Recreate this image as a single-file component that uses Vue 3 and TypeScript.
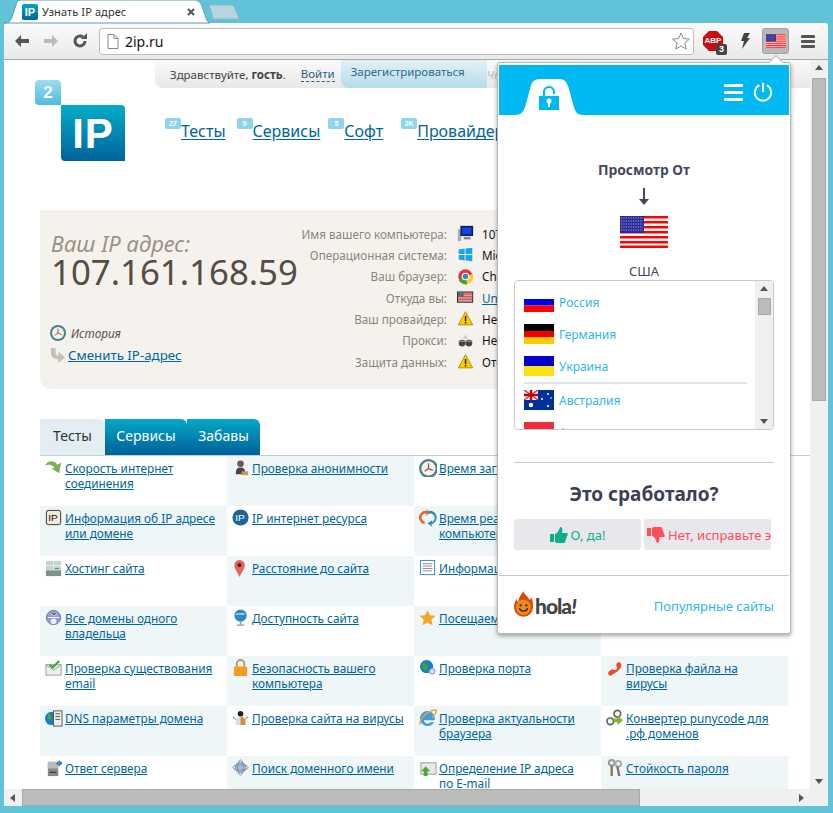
<script setup lang="ts">
const usMarkup = `<rect width="48" height="32" fill="#fff"/><g fill="#f00"><rect width="48" height="2.5"/><rect y="5" width="48" height="2.5"/><rect y="10" width="48" height="2.5"/><rect y="15" width="48" height="2.5"/><rect y="20" width="48" height="2.5"/><rect y="25" width="48" height="2.5"/><rect y="29.5" width="48" height="2.5"/></g><rect width="24" height="17" fill="#2a2a9c"/><path d="M1 2h22M1 5h22M1 8h22M1 11h22M1 14h22" stroke="#aab" stroke-width="1.2" stroke-dasharray="1.2 1.2"/>`

const countries = [
  { name: 'Россия', flag: '<rect width="30" height="20" fill="#fff"/><rect y="7" width="30" height="6.5" fill="#0000e6"/><rect y="13.5" width="30" height="6.5" fill="#f00"/>' },
  { name: 'Германия', flag: '<rect width="30" height="7" fill="#000"/><rect y="7" width="30" height="6.5" fill="#e00"/><rect y="13.5" width="30" height="6.5" fill="#fc0"/>' },
  { name: 'Украина', flag: '<rect width="30" height="10" fill="#0000cc"/><rect y="10" width="30" height="10" fill="#fae014"/>' },
  { name: 'Австралия', flag: '<rect width="30" height="20" fill="#00309a"/><rect width="14" height="10" fill="#eef"/><path d="M0 0l14 10M14 0L0 10" stroke="#c33" stroke-width="1.4"/><path d="M7 0v10M0 5h14" stroke="#c00" stroke-width="2.4"/><circle cx="7" cy="15" r="2.2" fill="#fff"/><circle cx="24" cy="4" r="1.1" fill="#fff"/><circle cx="18" cy="9" r="1" fill="#fff"/><circle cx="27" cy="8" r=".8" fill="#fff"/><circle cx="24" cy="16" r="1.1" fill="#fff"/>' },
  { name: 'Австрия', flag: '<rect width="30" height="7" fill="#ef2b3c"/><rect y="7" width="30" height="6.5" fill="#fff"/><rect y="13.5" width="30" height="6.5" fill="#ef2b3c"/>' },
]

const clock = '<circle cx="10" cy="10" r="10" fill="#4f7f8c"/><circle cx="10" cy="10" r="7.500" fill="#f2f2ee"/><path d="M10 4.500V10l-4 3M10 10l4.500 2" stroke="#a44" stroke-width="1.200" fill="none"/>'
const warn = '<path d="M10 2l8.500 15.500h-17z" fill="#fc0" stroke="#a80" stroke-width="1"/><rect x="9.200" y="7" width="1.800" height="6" fill="#222"/><rect x="9.200" y="14" width="1.800" height="1.800" fill="#222"/>'

const info = [
  { label: 'Имя вашего компьютера:', value: '107.161.168.59', icon: '<rect x="1" y="5" width="4" height="14" fill="#aab"/><rect x="4" y="1" width="15" height="12" fill="#124"/><rect x="6" y="3" width="11" height="8" fill="#14e"/><rect x="8" y="14" width="8" height="3" fill="#889"/>' },
  { label: 'Операционная система:', value: 'Microsoft Windows', icon: '<path d="M2 4l7-1v6.500H2zM10 3l8-1v7.500h-8zM2 10.500h7V17l-7-1zM10 10.500h8V18l-8-1z" fill="#1ca4e4"/>' },
  { label: 'Ваш браузер:', value: 'Chrome', icon: '<circle cx="10" cy="10" r="8.500" fill="#e33"/><path d="M10 10L2 14a8.500 8.500 0 0 0 10 5z" fill="#3a3"/><path d="M10 10l8-3a8.500 8.500 0 0 1-6 12z" fill="#fc3"/><circle cx="10" cy="10" r="4.500" fill="#fff"/><circle cx="10" cy="10" r="3.200" fill="#38c"/>' },
  { label: 'Откуда вы:', value: 'United States', link: true, icon: '<rect x=".5" y="3.500" width="18" height="12" fill="#e0a0a0" stroke="#111"/><path d="M1 6h17M1 9h17M1 12h17" stroke="#c44" stroke-width="1.200"/><rect x="1" y="4" width="7" height="5" fill="#667"/>' },
  { label: 'Ваш провайдер:', value: 'Неизвестно', icon: warn },
  { label: 'Прокси:', value: 'Неизвестно', icon: '<circle cx="6" cy="13" r="4" fill="#444"/><circle cx="14" cy="13" r="4" fill="#444"/><path d="M2 11h16" stroke="#888" stroke-width="1.500"/><path d="M7 8l3-5 3 5z" fill="#ccc"/>' },
  { label: 'Защита данных:', value: 'Отсутствует', icon: warn },
]

const i = {
  speed: '<path d="M0 7c3-6 10-6 13-1l4-2-2 11-8-5 3-1c-2-3-6-4-10-2z" fill="#7fae5a"/>',
  anon: '<circle cx="9" cy="5" r="3.500" fill="#754"/><path d="M4 16c0-6 2-7 5-7s5 1 5 7z" fill="#445"/><rect x="10" y="13" width="7" height="4" fill="#c94"/>',
  clock,
  ip: '<rect x="1.500" y="1.500" width="15" height="15" rx="2" fill="#f3e6da" stroke="#333"/><text x="3.300" y="13" font-size="10.500" font-family="Liberation Sans, sans-serif" fill="#111">IP</text>',
  ipRes: '<circle cx="9" cy="9" r="8.500" fill="#1b659d"/><text x="3.300" y="13" font-size="10.500" font-family="Liberation Sans, sans-serif" fill="#fff">IP</text>',
  react: '<path d="M8 2A7 7 0 0 0 6 16V13A4 4 0 0 1 8 5l-1 3 4-4-3-4z" fill="#f2622e"/><path d="M10 2a7 7 0 0 1 3 14l1 3-5-4 5-3-.5 2A4 4 0 0 0 10 5z" fill="#2d8cb0"/>',
  hosting: '<rect x="1" y="2" width="16" height="16" fill="#c6d2d2"/><path d="M1 7h16M1 12h16M9 2v16" stroke="#eee"/><rect x="1" y="12" width="16" height="6" fill="#7f9090"/><path d="M10 10h5" stroke="#3a3"/>',
  pin: '<path d="M8 19C5 12 2.500 10 2.500 6.500a5.500 5.500 0 0 1 11 0C13.500 10 11 12 8 19z" fill="#ee6055"/><circle cx="8" cy="6.500" r="2" fill="#222"/>',
  doc: '<rect x="1.500" y="1.500" width="15" height="15" fill="#fff" stroke="#2a90b0"/><path d="M4 5h10M4 7.500h10M4 10h10M4 12.500h10" stroke="#889"/>',
  domains: '<circle cx="9" cy="9" r="7.500" fill="#8e9cd8" stroke="#778"/><path d="M3 9h12M6 5c2 2 4 2 7 0" stroke="#fff"/><circle cx="9" cy="13" r="3" fill="#eee"/>',
  avail: '<circle cx="9" cy="7" r="6.500" fill="#2a8cc4"/><path d="M4 6c3-2 5 0 9-1" stroke="#bde" stroke-width="1.500" fill="none"/><path d="M9 13v4M5 17h8" stroke="#999" stroke-width="1.500"/>',
  star: '<path d="M9 1l2.500 5.500 6 .7-4.400 4 1.200 6L9 14.200 3.700 17.200l1.200-6L.5 7.200l6-.7z" fill="#f5a623"/>',
  mail: '<rect x="1" y="6" width="16" height="11" fill="#eee" stroke="#999"/><path d="M1 6l8 6 8-6" stroke="#999" fill="none"/><path d="M5 6l3 3 7-7" stroke="#3a3" stroke-width="2.200" fill="none"/>',
  lock: '<path d="M5 8V5a4 4 0 0 1 8 0v3" stroke="#b89a60" stroke-width="2" fill="none"/><rect x="2" y="8" width="14" height="10" rx="1.500" fill="#f39a1f"/>',
  port: '<circle cx="8" cy="8" r="7" fill="#1c7cc4"/><path d="M3 5c3-2 4 1 6 2s0 4-2 5-3-3-4-7z" fill="#3a3"/><circle cx="14" cy="13" r="3" fill="#cde" stroke="#89a"/>',
  worm: '<path d="M3 17c-2-3 1-5 3-6s3 2 5 0-2-5 1-7 5 1 4 4-4 6-7 7-3 4-6 2z" fill="#ef4a23"/>',
  dns: '<circle cx="7" cy="10" r="7" fill="#1c7cc4"/><path d="M3 5c3 1 5 2 3 7l-3-2z" fill="#4a3"/><rect x="9" y="2" width="9" height="16" fill="#eee" stroke="#555"/><path d="M11 5h5M11 8h5M11 11h5" stroke="#555"/>',
  bug: '<circle cx="9" cy="5" r="3" fill="#222"/><path d="M4 17c-1-5 1-9 5-9s6 4 5 9z" fill="#ddd"/><path d="M9 8v9h5c1-5-1-9-5-9z" fill="#d84"/><path d="M1 8l3 3M17 8l-3 3" stroke="#555"/>',
  browser: '<path d="M9 2a8 8 0 1 0 7 12h-4a4 4 0 0 1-7-2h11.500A8 8 0 0 0 9 2z" fill="#3f9be0"/><path d="M1 17C0 10 10 1 18 1c1 3-2 6-4 8" stroke="#f4a928" stroke-width="1.500" fill="none"/>',
  puny: '<circle cx="4.500" cy="13" r="3.500" fill="none" stroke="#666" stroke-width="1.800"/><circle cx="12" cy="5" r="3.500" fill="none" stroke="#666" stroke-width="1.800"/><path d="M8 10h4V7l6 5-6 5v-3H8z" fill="#7ab82d"/>',
  server: '<rect x="3" y="3" width="11" height="15" fill="#888"/><rect x="3" y="3" width="11" height="7" fill="#bbb"/><path d="M5 14h7" stroke="#222"/><path d="M11 5l5-4v2h2v3h-2v2z" fill="#38c"/>',
  search: '<circle cx="9" cy="9" r="5.500" fill="#9ac0ea" stroke="#889"/><ellipse cx="9" cy="9" rx="8" ry="3" fill="none" stroke="#889"/><ellipse cx="9" cy="9" rx="3" ry="8" fill="none" stroke="#889"/>',
  mailUp: '<rect x="2" y="4" width="16" height="12" fill="#e8e8e8" stroke="#999"/><path d="M7 8l5 5H9v5H5v-5H2z" fill="#4aa83a"/>',
  keys: '<circle cx="6" cy="4" r="3" fill="none" stroke="#999" stroke-width="2"/><path d="M6 7v11" stroke="#8a7a50" stroke-width="2.500"/><circle cx="13" cy="5" r="3" fill="none" stroke="#aaa" stroke-width="2"/><path d="M12 8l2 10" stroke="#776" stroke-width="2.500"/>',
}

const tools: { text: string[]; icon: string }[] = [
  { text: ['Скорость интернет', 'соединения'], icon: i.speed },
  { text: ['Проверка анонимности'], icon: i.anon },
  { text: ['Время загрузки'], icon: i.clock },
  { text: [], icon: '' },
  { text: ['Информация об IP адресе', 'или домене'], icon: i.ip },
  { text: ['IP интернет ресурса'], icon: i.ipRes },
  { text: ['Время реакции вашего', 'компьютера'], icon: i.react },
  { text: [], icon: '' },
  { text: ['Хостинг сайта'], icon: i.hosting },
  { text: ['Расстояние до сайта'], icon: i.pin },
  { text: ['Информация о сайте'], icon: i.doc },
  { text: [], icon: '' },
  { text: ['Все домены одного', 'владельца'], icon: i.domains },
  { text: ['Доступность сайта'], icon: i.avail },
  { text: ['Посещаемость'], icon: i.star },
  { text: [], icon: '' },
  { text: ['Проверка существования', 'email'], icon: i.mail },
  { text: ['Безопасность вашего', 'компьютера'], icon: i.lock },
  { text: ['Проверка порта'], icon: i.port },
  { text: ['Проверка файла на', 'вирусы'], icon: i.worm },
  { text: ['DNS параметры домена'], icon: i.dns },
  { text: ['Проверка сайта на вирусы'], icon: i.bug },
  { text: ['Проверка актуальности', 'браузера'], icon: i.browser },
  { text: ['Конвертер punycode для', '.рф доменов'], icon: i.puny },
  { text: ['Ответ сервера'], icon: i.server },
  { text: ['Поиск доменного имени'], icon: i.search },
  { text: ['Определение IP адреса', 'по E-mail'], icon: i.mailUp },
  { text: ['Стойкость пароля'], icon: i.keys },
]

const navItems = [
  { label: 'Тесты', count: '27' },
  { label: 'Сервисы', count: '9' },
  { label: 'Софт', count: '5' },
  { label: 'Провайдеры', count: '2K' },
]

// шахматная заливка ячеек
const isTinted = (index: number) => (Math.floor(index / 4) + index % 4) % 2 === 1
</script>

<template>
  <div class="window">
    <div class="tabstrip">
      <div class="tab">
        <svg class="tab-bg" viewBox="0 0 206 23" preserveAspectRatio="none"><path d="M0 23C6 23 7 20 9 14L12 5C13 1 15 0 19 0H190C194 0 196 2 198 6L202 18C203 21 205 23 206 23Z" fill="#fff" stroke="#5a9fb0" /></svg>
        <span class="favicon">IP</span>
        <span class="tab-title">Узнать IP адрес</span>
        <svg class="tab-close" viewBox="0 0 8 8"><path d="M1 1l6 6M7 1L1 7" stroke="#555" stroke-width="2" /></svg>
      </div>
      <svg class="new-tab" viewBox="0 0 32 16"><path d="M1 1H23C25 1 26 2 27 4L31 15H6C5 15 5 14 5 13Z" fill="#b7d4e0" stroke="#8fb6c4" /></svg>
    </div>

    <div class="toolbar">
      <svg class="tool" viewBox="0 0 16 16"><path d="M1 8l6-6v4h8v4H7v4z" fill="#555" /></svg>
      <svg class="tool dim" viewBox="0 0 16 16"><path d="M15 8L9 2v4H1v4h8v4z" fill="#bbb" /></svg>
      <svg class="tool" viewBox="0 0 16 16"><path d="M13 8a5 5 0 1 1-2-4" fill="none" stroke="#555" stroke-width="3" /><path d="M9 6h6V0z" fill="#555" /></svg>
      <div class="omnibox">
        <svg class="file" viewBox="0 0 12 15"><path d="M1 .5h6l4 4v10H1z" fill="#fff" stroke="#888" /><path d="M7 .5v4h4" fill="none" stroke="#888" /></svg>
        <span class="url">2ip.ru</span>
        <svg class="star-btn" viewBox="0 0 18 18"><path d="M9 1l2.400 5.500 6 .6-4.500 4 1.300 5.900L9 14l-5.200 3 1.300-5.900L.6 7.100l6-.6z" fill="#fff" stroke="#888" /></svg>
      </div>
      <div class="abp">
        <svg viewBox="0 0 20 20"><path d="M6 0h8l6 6v8l-6 6H6l-6-6V6z" fill="#c70d0d" /></svg>
        <span class="abp-text">ABP</span>
        <span class="abp-count">3</span>
      </div>
      <svg class="bolt" viewBox="0 0 10 16"><path d="M4 0h6L7 5h3L2 16l2-8H1z" fill="#444" /></svg>
      <div class="flag-btn"><svg viewBox="0 0 48 32" v-html="usMarkup" /></div>
      <div class="menu-btn"><span /><span /><span /></div>
    </div>

    <div class="viewport">
      <div class="page">
        <header class="head">
          <div class="logo">
            <div class="logo-two">2</div>
            <div class="logo-ip">IP</div>
          </div>
          <div class="head-right">
            <div class="topbar">
              <span class="hello">Здравствуйте, <b>гость</b>.</span>
              <span class="login">Войти</span>
              <span class="register">Зарегистрироваться</span>
              <span class="faint">Что нового</span>
            </div>
            <nav class="nav">
              <a v-for="item in navItems" :key="item.label" class="nav-item">
                <span class="badge">{{ item.count }}</span>{{ item.label }}
              </a>
            </nav>
          </div>
        </header>

        <section class="panel">
          <div class="ip-col">
            <div class="ip-caption">Ваш IP адрес:</div>
            <div class="ip-value">107.161.168.59</div>
            <div class="history">
              <svg viewBox="0 0 20 20" v-html="clock" />
              <i>История</i>
            </div>
            <div class="change">
              <svg viewBox="0 0 16 16"><path d="M1 0h5v5c0 2 1 3 3 3V4l7 6-7 6v-4C4 12 1 9 1 5z" fill="#c4bfb8" /></svg>
              <a>Сменить IP-адрес</a>
            </div>
          </div>
          <div class="info">
            <div v-for="row in info" :key="row.label" class="info-row">
              <span class="info-label">{{ row.label }}</span>
              <svg class="info-icon" viewBox="0 0 20 20" v-html="row.icon" />
              <span class="info-value" :class="{ link: row.link }">{{ row.value }}</span>
            </div>
          </div>
        </section>

        <div class="tabs">
          <span class="page-tab active">Тесты</span>
          <span class="page-tab">Сервисы</span>
          <span class="page-tab">Забавы</span>
        </div>
        <div class="tools">
          <div v-for="(tool, index) in tools" :key="index" class="cell" :class="{ tinted: isTinted(index) }">
            <svg class="cell-icon" viewBox="0 0 19 19" v-html="tool.icon" />
            <div class="cell-text"><a v-for="line in tool.text" :key="line">{{ line }}</a></div>
          </div>
        </div>
      </div>

      <div class="vscroll">
        <span class="arrow up" />
        <div class="v-track"><div class="v-thumb" /></div>
        <span class="arrow down" />
      </div>

      <div class="popup">
        <span class="popup-tip" />
        <div class="popup-head">
          <div class="popup-tab">
            <svg class="tab-shape" viewBox="0 0 70 36" preserveAspectRatio="none"><path d="M0 36C6 36 9 33 11 26L16 8C17 3 20 0 26 0H46C51 0 53 3 55 8L60 26C62 33 64 36 70 36Z" fill="#fff" /></svg>
            <svg class="unlock" viewBox="0 0 20 25"><path d="M5 11V7a5 5 0 0 1 10 0v2" fill="none" stroke="#00b9f2" stroke-width="2.200" /><path d="M0 11h20v14H0z" fill="#00b9f2" /><circle cx="10" cy="16" r="2.500" fill="#fff" /><rect x="9" y="17" width="2" height="5" fill="#fff" /></svg>
          </div>
          <div class="head-actions">
            <div class="bars"><span /><span /><span /></div>
            <svg class="power" viewBox="0 0 22 22"><path d="M7 3.500a9 9 0 1 0 8 0" fill="none" stroke="#fff" stroke-width="2" /><path d="M11 1v10" stroke="#fff" stroke-width="2.400" /></svg>
          </div>
        </div>

        <div class="popup-body">
          <div class="view-from">Просмотр От</div>
          <svg class="down-arrow" viewBox="0 0 10 18"><path d="M5 0v13" stroke="#45465f" stroke-width="2" /><path d="M0 11h10l-5 6z" fill="#45465f" /></svg>
          <svg class="big-flag" viewBox="0 0 48 32" v-html="usMarkup" />
          <div class="country">США</div>

          <div class="list">
            <div class="list-items">
              <div v-for="(c, index) in countries" :key="c.name" class="list-row" :class="{ sep: index === 3 }">
                <svg viewBox="0 0 30 20" v-html="c.flag" />
                <span>{{ c.name }}</span>
              </div>
            </div>
            <div class="list-scroll">
              <span class="arrow up" />
              <div class="list-thumb" />
              <span class="arrow down" />
            </div>
          </div>

          <div class="question">Это сработало?</div>
          <div class="answers">
            <button class="answer yes">
              <svg viewBox="0 0 18 18"><path d="M0 8h4v8H0zM5 8c3-1 4-4 5-7 2 0 3 2 2 6h5c1 0 1 2 0 3l-2 6c0 1-1 1-2 1H7c-1 0-2-1-2-1z" fill="#0db08b" /></svg>
              О, да!
            </button>
            <button class="answer no">
              <svg viewBox="0 0 18 18"><path d="M0 2h4v8H0zM5 10c3 1 4 4 5 7 2 0 3-2 2-6h5c1 0 1-2 0-3l-2-6c0-1-1-1-2-1H7C6 1 5 2 5 2z" fill="#ff4d5a" /></svg>
              <span>Нет, исправьте это</span>
            </button>
          </div>
        </div>

        <div class="popup-foot">
          <div class="hola">
            <svg viewBox="0 0 20 27"><path d="M10 0c1 4 5 5 6 9 2-1 2-2 2-3 2 4 2 7 2 11a10 10 0 0 1-20 0c0-4 1-6 3-9 0 2 0 3 2 3C4 8 7 4 10 0z" fill="#d9480f" /><circle cx="10" cy="17" r="8" fill="#f08a12" /><circle cx="7" cy="15" r="1.200" fill="#222" /><circle cx="13" cy="15" r="1.200" fill="#222" /><path d="M5.500 18c2 4 7 4 9 0" stroke="#222" stroke-width="1.400" fill="none" /></svg>
            <b>hola<i>!</i></b>
          </div>
          <a class="popular">Популярные сайты</a>
        </div>
      </div>
    </div>

    <div class="hscroll">
      <span class="arrow left" />
      <div class="h-track"><div class="h-thumb" /></div>
      <span class="arrow right" />
      <span class="corner" />
    </div>
  </div>
</template>

<style>
html, body { margin: 0; background: #62c3d8; }
</style>

<style scoped>
.window {
  width: 833px;
  height: 813px;
  overflow: hidden;
  box-sizing: border-box;
  padding: 0 5px 7px 4px;
  background: #62c3d8;
  display: flex;
  flex-direction: column;
  font-family: "Noto Sans", "Open Sans", sans-serif;
}

/* вкладки браузера */
.tabstrip { height: 23px; display: flex; flex: none; }
.tab {
  position: relative;
  width: 204px;
  display: flex;
  align-items: center;
  padding-left: 18px;
  box-sizing: border-box;
}
.tab-bg { position: absolute; left: 0; top: 0; width: 206px; height: 23px; overflow: visible; }
.favicon {
  position: relative;
  width: 16px; height: 16px;
  background: linear-gradient(#05a5c6, #00659b);
  border-radius: 2px;
  color: #fff;
  font: bold 11px/16px "Liberation Sans", sans-serif;
  text-align: center;
}
.tab-title {
  position: relative;
  margin-left: 4px;
  font: 11px "Noto Sans", sans-serif;
  letter-spacing: .1px;
  color: #333;
}
.tab-close { position: absolute; left: 183px; top: 8px; width: 8px; height: 8px; }
.new-tab { width: 32px; height: 16px; margin-top: 4px; }

.toolbar {
  height: 37px;
  flex: none;
  box-sizing: border-box;
  background: linear-gradient(#fbfbfb, #e9e9e9);
  border-bottom: 1px solid #a9a9a9;
  display: flex;
  align-items: center;
  padding: 0 12px 0 10px;
  border-radius: 3px 3px 0 0;
}
.tool { width: 16px; height: 16px; margin-right: 13px; flex: none; }
.omnibox {
  width: 595px;
  height: 27px;
  margin-left: -2px;
  flex: none;
  box-sizing: border-box;
  background: #fff;
  border: 1px solid #bdbdbd;
  border-radius: 3px;
  display: flex;
  align-items: center;
  padding: 0 3px 0 7px;
}
.file { width: 12px; height: 15px; }
.url { margin-left: 6px; font: 14px "Noto Sans", sans-serif; color: #111; flex: 1; }
.star-btn { width: 18px; height: 18px; }
.abp { position: relative; width: 20px; height: 20px; margin-left: 9px; flex: none; }
.abp svg { width: 20px; height: 20px; display: block; }
.abp-text {
  position: absolute; left: 0; top: 4px; width: 20px;
  font: bold 8px/11px "Liberation Sans", sans-serif;
  color: #fff; text-align: center;
}
.abp-count {
  position: absolute; left: 13px; top: 13px;
  width: 11px; height: 11px;
  background: #444; color: #fff; border-radius: 2px;
  font: bold 9px/11px "Liberation Sans", sans-serif;
  text-align: center;
}
.bolt { width: 10px; height: 16px; margin-left: 17px; flex: none; }
.flag-btn {
  width: 27px; height: 26px;
  margin-left: 12px;
  box-sizing: border-box;
  flex: none;
  background: #b9b9b9;
  border: 1px solid #a0a0a0;
  border-radius: 3px;
  display: flex; align-items: center; justify-content: center;
}
.flag-btn svg { width: 20px; height: 14px; }
.menu-btn { margin-left: 12px; display: flex; flex-direction: column; gap: 2px; flex: none; }
.menu-btn span { display: block; width: 14px; height: 3px; background: #555; border-radius: 1px; }

/* окно страницы */
.viewport { position: relative; flex: 1; min-height: 0; display: flex; background: #fff; }
.page { flex: 1; min-width: 0; overflow: hidden; background: #fff; }
.head { display: flex; height: 150px; padding-left: 31px; }
.logo { width: 90px; flex: none; padding-top: 20px; }
.logo-two {
  width: 26px; height: 25px;
  background: linear-gradient(#9bddf0, #4fb9dc);
  border-radius: 4px 4px 0 4px;
  color: #fff;
  font: bold 17px/25px "Liberation Sans", sans-serif;
  text-align: center;
}
.logo-ip {
  width: 64px; height: 56px;
  margin-left: 26px;
  background: linear-gradient(#04acc9, #00639a);
  border-radius: 0 4px 0 4px;
  color: #fff;
  font: bold 42px/57px "Liberation Sans", sans-serif;
  letter-spacing: 1px;
  text-align: center;
}
.head-right { flex: 1; min-width: 0; overflow: hidden; }
.topbar {
  width: 660px;
  height: 28px;
  margin-left: 30px;
  box-sizing: border-box;
  padding-left: 15px;
  display: flex;
  align-items: center;
  background: linear-gradient(#fafafa, #e8e8e8);
  border-radius: 0 0 0 8px;
  font-size: 11.500px;
  color: #444;
}
.login { margin-left: 15px; color: #2d5f80; border-bottom: 1px dashed #2d5f80; line-height: 14px; }
.register {
  margin-left: 6px;
  height: 28px;
  padding: 0 22px 0 10px;
  line-height: 24px;
  background: linear-gradient(#e3f1f6, #b4dce9);
  border-radius: 0 0 0 8px;
  color: #2a6a8a;
}
.faint { color: #bbb; font-style: italic; }
.nav { display: flex; margin: 32px 0 0 40px; }
.nav-item {
  position: relative;
  padding-left: 16px;
  margin-right: 11px;
  color: #00659b;
  font-size: 16px;
  line-height: 22px;
  white-space: nowrap;
  text-decoration: underline;
  text-underline-offset: 2px;
}
.nav-item:nth-child(2) { margin-right: 8px; }
.nav-item:nth-child(3) { margin-right: 18px; }
.nav-item .badge {
  position: absolute;
  left: 0; top: -2px;
  min-width: 12px;
  height: 11px;
  padding: 0 2px;
  background: #8dd4ec;
  border-radius: 2px;
  color: #fff;
  font: bold 7px/11px "Liberation Sans", sans-serif;
  text-align: center;
}

.panel {
  margin-left: 36px;
  width: 745px;
  height: 179px;
  box-sizing: border-box;
  padding: 21px 0 0 10px;
  background: #f5f2ee;
  border-radius: 0 0 0 10px;
  display: flex;
}
.ip-col { width: 251px; flex: none; }
.ip-caption { font-style: italic; font-size: 22px; line-height: 24px; color: #9c9284; padding-left: 1px; }
.ip-value { font-size: 34.800px; line-height: 34px; color: #554d42; white-space: nowrap; padding-left: 1px; }
.history {
  display: flex; align-items: center; gap: 5px;
  margin-top: 36px;
  font-size: 11.800px;
  color: #555;
}
.history svg { width: 16px; height: 16px; }
.change {
  display: flex; align-items: center; gap: 3px;
  margin-top: 5px;
  font-size: 13.300px;
  color: #00659b;
  text-decoration: underline;
}
.change svg { width: 15px; height: 15px; }
.info { width: 420px; flex: none; margin-top: -8px; }
.info-row { display: flex; align-items: center; height: 21.330px; font-size: 11.700px; white-space: nowrap; }
.info-label { width: 146px; text-align: right; color: #8d8478; }
.info-icon { width: 17px; height: 17px; margin-left: 10px; flex: none; }
.info-value { margin-left: 8px; color: #111; }
.info-value.link { color: #00659b; text-decoration: underline; }

/* таблица сервисов */
.tabs { display: flex; margin: 30px 0 0 36px; height: 36px; border-bottom: 1px solid #bfd2d8; }
.page-tab {
  width: 65px;
  box-sizing: border-box;
  background: linear-gradient(#04a8c8, #00609a);
  border-radius: 0 6px 0 0;
  color: #fff;
  font-size: 14px;
  line-height: 33px;
  text-align: center;
}
.page-tab + .page-tab { width: 82px; }
.page-tab:last-child { width: 73px; }
.page-tab.active { background: #e2eef3; color: #333; }

.tools { margin-left: 36px; display: grid; grid-template-columns: repeat(4, 187px); grid-auto-rows: 50px; }
.cell { display: flex; padding: 5px 0 0 5px; box-sizing: border-box; font-size: 11.800px; line-height: 15px; }
.cell.tinted { background: #eef6f8; }
.cell-icon { width: 18px; height: 18px; flex: none; margin-right: 2px; margin-top: -2px; }
.cell-text { display: flex; flex-direction: column; align-items: flex-start; }
.cell-text a { color: #00659b; text-decoration: underline; white-space: nowrap; }

/* полосы прокрутки */
.vscroll { width: 18px; flex: none; background: #f0f0f0; display: flex; flex-direction: column; align-items: center; }
.v-track { flex: 1; width: 100%; padding-top: 3px; box-sizing: border-box; }
.v-thumb { width: 14px; height: 323px; margin: 0 auto; background: #bcbcbc; border: 1px solid #a8a8a8; box-sizing: border-box; }
.arrow { width: 0; height: 0; flex: none; border: 4px solid transparent; }
.arrow.up { border-bottom: 5px solid #555; border-top: 0; margin: 5px 0; }
.arrow.down { border-top: 5px solid #555; border-bottom: 0; margin: 5px 0; }
.arrow.left { border-right: 5px solid #555; border-left: 0; margin: 0 6px; }
.arrow.right { border-left: 5px solid #555; border-right: 0; margin: 0 6px; }
.hscroll { height: 17px; flex: none; background: #f0f0f0; display: flex; align-items: center; }
.h-track { flex: 1; height: 100%; }
.h-thumb { width: 618px; height: 100%; margin-left: 1px; background: #bcbcbc; border: 1px solid #a8a8a8; box-sizing: border-box; }
.corner { width: 18px; height: 17px; background: #f0f0f0; }

/* всплывающее окно расширения */
.popup {
  position: absolute;
  left: 493px;
  top: 2px;
  width: 294px;
  height: 572px;
  box-sizing: border-box;
  background: #fff;
  border: 1px solid #b8b8b8;
  border-radius: 3px;
  box-shadow: 0 2px 4px rgba(0, 0, 0, .35);
  padding: 2px 1px 1px;
  display: flex;
  flex-direction: column;
}
.popup-tip {
  position: absolute;
  left: 273px; top: -6px;
  width: 9px; height: 9px;
  background: #fff;
  border-left: 1px solid #b8b8b8;
  border-top: 1px solid #b8b8b8;
  transform: rotate(45deg);
}
.popup-head {
  position: relative;
  height: 50px;
  flex: none;
  background: #00b9f2;
  display: flex;
  align-items: flex-end;
  justify-content: space-between;
  padding: 0 16px;
}
.popup-tab { position: relative; width: 68px; height: 36px; }
.tab-shape { width: 68px; height: 36px; display: block; }
.unlock { position: absolute; left: 24px; top: 6px; width: 20px; height: 25px; }
.head-actions { display: flex; align-items: center; gap: 10px; align-self: center; margin-top: 4px; }
.bars { display: flex; flex-direction: column; gap: 4px; }
.bars span { display: block; width: 19px; height: 3px; background: #fff; border-radius: 1px; }
.power { width: 20px; height: 20px; }
.popup-body { flex: 1; display: flex; flex-direction: column; align-items: center; padding: 47px 15px 0; box-sizing: border-box; min-height: 0; }
.view-from { font-size: 13.800px; font-weight: 700; line-height: 16px; color: #45465f; }
.down-arrow { width: 10px; height: 18px; margin-top: 10px; flex: none; }
.big-flag { width: 48px; height: 32px; margin-top: 10px; flex: none; }
.country { margin-top: 15px; font-size: 13px; line-height: 17px; color: #45465f; }
.list {
  align-self: stretch;
  height: 150px;
  flex: none;
  box-sizing: border-box;
  border: 1px solid #c8c8d2;
  border-radius: 4px;
  display: flex;
  overflow: hidden;
}
.list-items { flex: 1; min-width: 0; padding: 5px 8px 0 9px; overflow: hidden; }
.list-row { display: flex; align-items: center; gap: 5px; height: 32px; font-size: 12px; line-height: 20px; color: #2fb5ee; }
.list-row span { margin-top: 2px; }
.list-row svg { width: 30px; height: 20px; flex: none; }
.list-row.sep { border-top: 2px solid #e4e4ea; height: 34px; box-sizing: border-box; }
.list-scroll { width: 18px; flex: none; background: #f0f0f0; display: flex; flex-direction: column; align-items: center; }
.list-thumb { width: 13px; height: 17px; margin-top: 2px; background: #bcbcbc; border: 1px solid #a8a8a8; box-sizing: border-box; }
.list-scroll .arrow.down { margin-top: auto; }
.question {
  align-self: stretch;
  margin-top: 32px;
  padding-top: 19px;
  border-top: 1px solid #c8c8d0;
  text-align: center;
  font-size: 19px;
  font-weight: 700;
  line-height: 24px;
  color: #3d3e58;
}
.answers { align-self: stretch; display: flex; gap: 3px; margin-top: 13px; padding-right: 3px; }
.answer {
  width: 127px;
  height: 31px;
  border: 0;
  border-radius: 3px;
  background: #e8e8ec;
  display: flex; align-items: center; justify-content: center; gap: 3px;
  font: 13px "Noto Sans", sans-serif;
  white-space: nowrap;
  overflow: hidden;
  padding: 0;
}
.answer svg { width: 18px; height: 18px; flex: none; }
.answer.yes { color: #0db08b; }
.answer.no { color: #ff4d5a; justify-content: flex-start; padding-left: 3px; }
.popup-foot {
  height: 56px;
  flex: none;
  border-top: 1px solid #c8c8d0;
  display: flex;
  align-items: center;
  justify-content: space-between;
  padding: 0 15px;
}
.hola { display: flex; align-items: flex-end; gap: 2px; }
.hola svg { width: 19px; height: 26px; }
.hola b { font: 900 21px/22px Lato, "Liberation Sans", sans-serif; letter-spacing: -1px; color: #444; }
.popular { font-size: 13px; color: #2fb5ee; margin-top: 3px; }
</style>
